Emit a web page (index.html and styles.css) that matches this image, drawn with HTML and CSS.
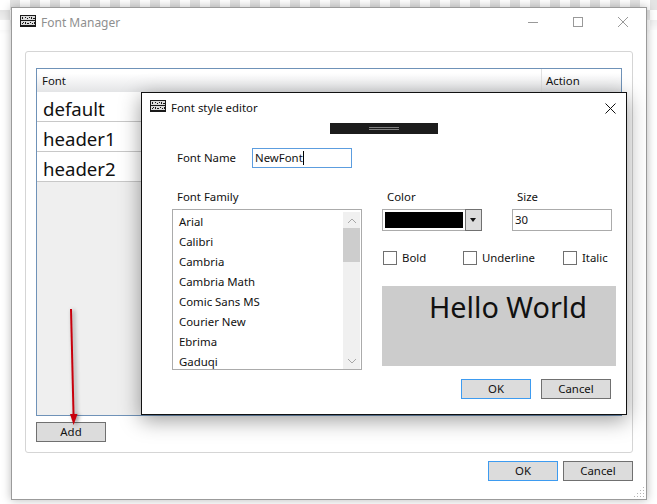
FILE: index.html
```html
<!DOCTYPE html>
<html lang="en">
<head>
  <meta charset="UTF-8">
  <title>Font Manager</title>
  <link rel="stylesheet" href="styles.css">
</head>
<body>

  <svg class="defs" width="0" height="0">
    <symbol id="app-icon" viewBox="0 0 16 12">
      <rect width="16" height="12" fill="#1a1a1a"/>
      <path d="M1 1h14v4h-14zM1 6h14v4h-14z" fill="#dcdcdc"/>
      <path d="M2 2h1v2h-1zM5 2h1v1h-1zM7 3h1v1h-1zM9 2h1v1h-1zM11 2h1v2h-1zM13 3h2v1h-2zM3 7h1v1h-1zM2 8h1v1h-1zM5 7h1v2h-1zM7 8h2v1h-2zM10 7h1v1h-1zM12 8h1v1h-1zM14 7h1v2h-1z" fill="#1a1a1a"/>
    </symbol>
  </svg>

  <div class="backdrop"></div>

  <!-- Main window -->
  <div class="window main-window">
    <div class="titlebar">
      <svg class="app-icon"><use href="#app-icon"/></svg>
      <span class="title">Font Manager</span>
      <div class="controls">
        <svg width="10" height="10" viewBox="0 0 10 10"><path d="M0 5.5h10" stroke="#999" fill="none"/></svg>
        <svg width="10" height="10" viewBox="0 0 10 10"><rect x="0.5" y="0.5" width="9" height="9" stroke="#999" fill="none"/></svg>
        <svg width="10" height="10" viewBox="0 0 10 10"><path d="M0 0l10 10M10 0l-10 10" stroke="#999" fill="none"/></svg>
      </div>
    </div>

    <div class="group">
      <div class="grid">
        <div class="grid-head">
          <div class="cell-font">Font</div>
          <div class="cell-action">Action</div>
        </div>
        <div class="grid-row">default</div>
        <div class="grid-row">header1</div>
        <div class="grid-row">header2</div>
      </div>
      <button class="btn add-btn">Add</button>
    </div>

    <div class="footer">
      <button class="btn btn-default">OK</button>
      <button class="btn">Cancel</button>
    </div>

    <svg class="grip" width="12" height="12" viewBox="0 0 12 12">
      <path d="M10 1h1v1h-1zM10 4h1v1h-1zM7 4h1v1h-1zM10 7h1v1h-1zM7 7h1v1h-1zM4 7h1v1h-1zM10 10h1v1h-1zM7 10h1v1h-1zM4 10h1v1h-1zM1 10h1v1h-1z" fill="#b5b5b5"/>
    </svg>
  </div>

  <!-- Font style editor dialog -->
  <div class="window dialog">
    <div class="dialog-title">
      <svg class="app-icon"><use href="#app-icon"/></svg>
      <span>Font style editor</span>
      <svg class="dialog-close" width="11" height="11" viewBox="0 0 11 11"><path d="M0.5 0.5l10 10M10.5 0.5l-10 10" stroke="#111" fill="none"/></svg>
    </div>

    <div class="drag-bar"><i></i></div>

    <div class="name-row">
      <label>Font Name</label>
      <div class="text-input focused">NewFont<span class="caret"></span></div>
    </div>

    <div class="editor">
      <div class="family-col">
        <label>Font Family</label>
        <div class="listbox">
          <ul>
            <li>Arial</li>
            <li>Calibri</li>
            <li>Cambria</li>
            <li>Cambria Math</li>
            <li>Comic Sans MS</li>
            <li>Courier New</li>
            <li>Ebrima</li>
            <li>Gaduqi</li>
          </ul>
          <div class="scrollbar">
            <svg width="10" height="6" viewBox="0 0 10 6"><path d="M1 5l4-4 4 4" stroke="#a6a6a6" fill="none"/></svg>
            <div class="thumb"></div>
            <svg class="down" width="10" height="6" viewBox="0 0 10 6"><path d="M1 1l4 4 4-4" stroke="#a6a6a6" fill="none"/></svg>
          </div>
        </div>
      </div>

      <div class="style-col">
        <div class="fields">
          <div class="field">
            <label>Color</label>
            <div class="combo">
              <div class="swatch"></div>
              <div class="combo-arrow"></div>
            </div>
          </div>
          <div class="field">
            <label>Size</label>
            <div class="text-input size-input">30</div>
          </div>
        </div>

        <div class="checks">
          <div class="check check-bold"><span class="box"></span>Bold</div>
          <div class="check check-underline"><span class="box"></span>Underline</div>
          <div class="check"><span class="box"></span>Italic</div>
        </div>

        <div class="preview">Hello World</div>

        <div class="dialog-buttons">
          <button class="btn btn-default">OK</button>
          <button class="btn">Cancel</button>
        </div>
      </div>
    </div>
  </div>

  <!-- Annotation arrow -->
  <svg class="arrow" width="20" height="130" viewBox="0 0 20 130">
    <path d="M6 4L8.6 112" stroke="#c8000c" stroke-width="2" fill="none"/>
    <path d="M5 109L12.5 109L8.6 120z" fill="#c8000c"/>
  </svg>

</body>
</html>
```

FILE: styles.css
```css
* {
  box-sizing: border-box;
}

body {
  margin: 0;
  width: 657px;
  height: 504px;
  position: relative;
  overflow: hidden;
  background: #fff;
  font-family: "Noto Sans", "Open Sans", sans-serif;
  font-size: 11.4px;
  line-height: 16px;
  color: #111;
}

.defs {
  position: absolute;
}

.backdrop {
  position: absolute;
  left: 0;
  top: 0;
  width: 657px;
  height: 34px;
  background: repeating-conic-gradient(#e4e4e4 0 25%, #fff 0 50%) 0 0 / 20px 20px;
  -webkit-mask-image: linear-gradient(#000 30%, transparent);
  mask-image: linear-gradient(#000 30%, transparent);
}

.window {
  position: absolute;
  background: #fff;
}

.main-window {
  left: 11px;
  top: 7px;
  width: 636px;
  height: 493px;
  border: 1px solid #9b9b9b;
  box-shadow: 0 0 9px rgba(0,0,0,0.28);
  display: flex;
  flex-direction: column;
}

.titlebar {
  height: 43px;
  padding: 7px 18px 0 8px;
  display: flex;
  align-items: flex-start;
}

.app-icon {
  width: 16px;
  height: 12px;
  flex: none;
}

.title {
  margin: 0 0 0 5px;
  color: #8f8f8f;
  font-size: 12px;
}

.controls {
  margin-left: auto;
  margin-top: 2px;
  display: flex;
  gap: 35px;
}

.group {
  margin: 0 13px;
  height: 402px;
  padding: 16px 10px 10px;
  border: 1px solid #d5d5d5;
  border-radius: 3px;
}

.grid {
  height: 348px;
  border: 1px solid #6f92b8;
  background: #efefef;
}

.grid-head {
  height: 23px;
  display: flex;
  background: linear-gradient(#fff, #fff 20%, #e3e4e6);
}

.cell-font {
  flex: 1;
  padding: 4px 5px 0;
}

.cell-action {
  width: 80px;
  padding: 4px 4px 0;
  border-left: 1px solid #e0e0e0;
}

.grid-row {
  height: 30px;
  padding: 2px 0 0 6px;
  background: #fff;
  border-bottom: 1px solid #c8c8c8;
  font-size: 18.6px;
  line-height: 30px;
}

.btn {
  display: block;
  width: 70px;
  height: 20px;
  padding: 0;
  background: #dcdcdc;
  border: 1px solid #707070;
  font: inherit;
  color: #111;
}

.btn-default {
  border-color: #3d9bf0;
}

.add-btn {
  margin-top: 6px;
}

.footer {
  margin-top: 8px;
  padding-right: 13px;
  display: flex;
  justify-content: flex-end;
  gap: 5px;
}

.grip {
  position: absolute;
  right: 1px;
  bottom: 1px;
}

.dialog {
  left: 141px;
  top: 92px;
  width: 486px;
  height: 323px;
  border: 1px solid #111;
  box-shadow: 0 5px 20px rgba(0,0,0,0.4);
}

.dialog-title {
  height: 30px;
  padding: 7px 10px 0 8px;
  display: flex;
  align-items: flex-start;
  gap: 5px;
}

.dialog-close {
  margin: 3px 0 0 auto;
}

.drag-bar {
  width: 108px;
  height: 11px;
  margin: 0 auto;
  background: #1c1c1c;
  display: flex;
  align-items: center;
  justify-content: center;
}

.drag-bar i {
  width: 30px;
  height: 3px;
  border-top: 1px solid #808080;
  border-bottom: 1px solid #808080;
}

.name-row {
  margin: 14px 0 0 35px;
  display: flex;
  align-items: center;
}

.name-row label {
  width: 75px;
}

.text-input {
  width: 100px;
  height: 20px;
  padding: 1px 2px;
  border: 1px solid #ababab;
  background: #fff;
}

.text-input.focused {
  border-color: #5c9ddf;
}

.caret {
  display: inline-block;
  width: 1px;
  height: 14px;
  background: #000;
  vertical-align: -3px;
}

.editor {
  margin: 21px 0 0 30px;
  display: flex;
  gap: 20px;
}

.family-col {
  width: 190px;
}

.family-col label,
.field label {
  display: block;
  height: 20px;
  padding-left: 5px;
}

.listbox {
  height: 161px;
  padding: 2px 0 0 6px;
  border: 1px solid #ababab;
  display: flex;
  overflow: hidden;
}

.listbox ul {
  flex: 1;
  margin: 0;
  padding: 0;
  list-style: none;
}

.listbox li {
  height: 20px;
  line-height: 20px;
}

.scrollbar {
  width: 17px;
  height: 157px;
  margin: 0 1px 0 0;
  background: #f0f0f0;
  display: flex;
  flex-direction: column;
  align-items: center;
  padding-top: 6px;
}

.thumb {
  width: 17px;
  height: 34px;
  margin-top: 4px;
  background: #cdcdcd;
}

.scrollbar .down {
  margin-top: auto;
  margin-bottom: 5px;
}

.style-col {
  width: 234px;
  padding-top: 0;
}

.fields {
  display: flex;
  gap: 30px;
}

.combo {
  width: 100px;
  height: 22px;
  border: 1px solid #ababab;
  padding: 2px 0 0 2px;
  display: flex;
  background: #fff;
}

.swatch {
  width: 78px;
  height: 16px;
  background: #000;
}

.combo-arrow {
  width: 17px;
  height: 22px;
  margin: -3px -1px 0 2px;
  background: #dcdcdc;
  border: 1px solid #707070;
  position: relative;
}

.combo-arrow::after {
  content: "";
  position: absolute;
  left: 4px;
  top: 8px;
  border: 3.5px solid transparent;
  border-top: 4px solid #111;
  border-bottom: 0;
}

.size-input {
  height: 22px;
  padding-top: 2px;
}

.checks {
  margin: 19px 0 0 1px;
  display: flex;
}

.check {
  display: flex;
  align-items: center;
  gap: 5px;
}

.check-bold {
  width: 80px;
}

.check-underline {
  width: 100px;
}

.box {
  width: 14px;
  height: 14px;
  border: 1px solid #707070;
  background: #fff;
}

.preview {
  height: 80px;
  margin-top: 20px;
  padding: 2px 29px 0 0;
  background: #ccc;
  text-align: right;
  font-size: 28.8px;
  line-height: 38px;
}

.dialog-buttons {
  margin-top: 13px;
  padding-right: 5px;
  display: flex;
  justify-content: flex-end;
  gap: 10px;
}

.arrow {
  position: absolute;
  left: 65px;
  top: 305px;
  filter: drop-shadow(2px 1px 2px rgba(0,0,0,0.45));
}
```
